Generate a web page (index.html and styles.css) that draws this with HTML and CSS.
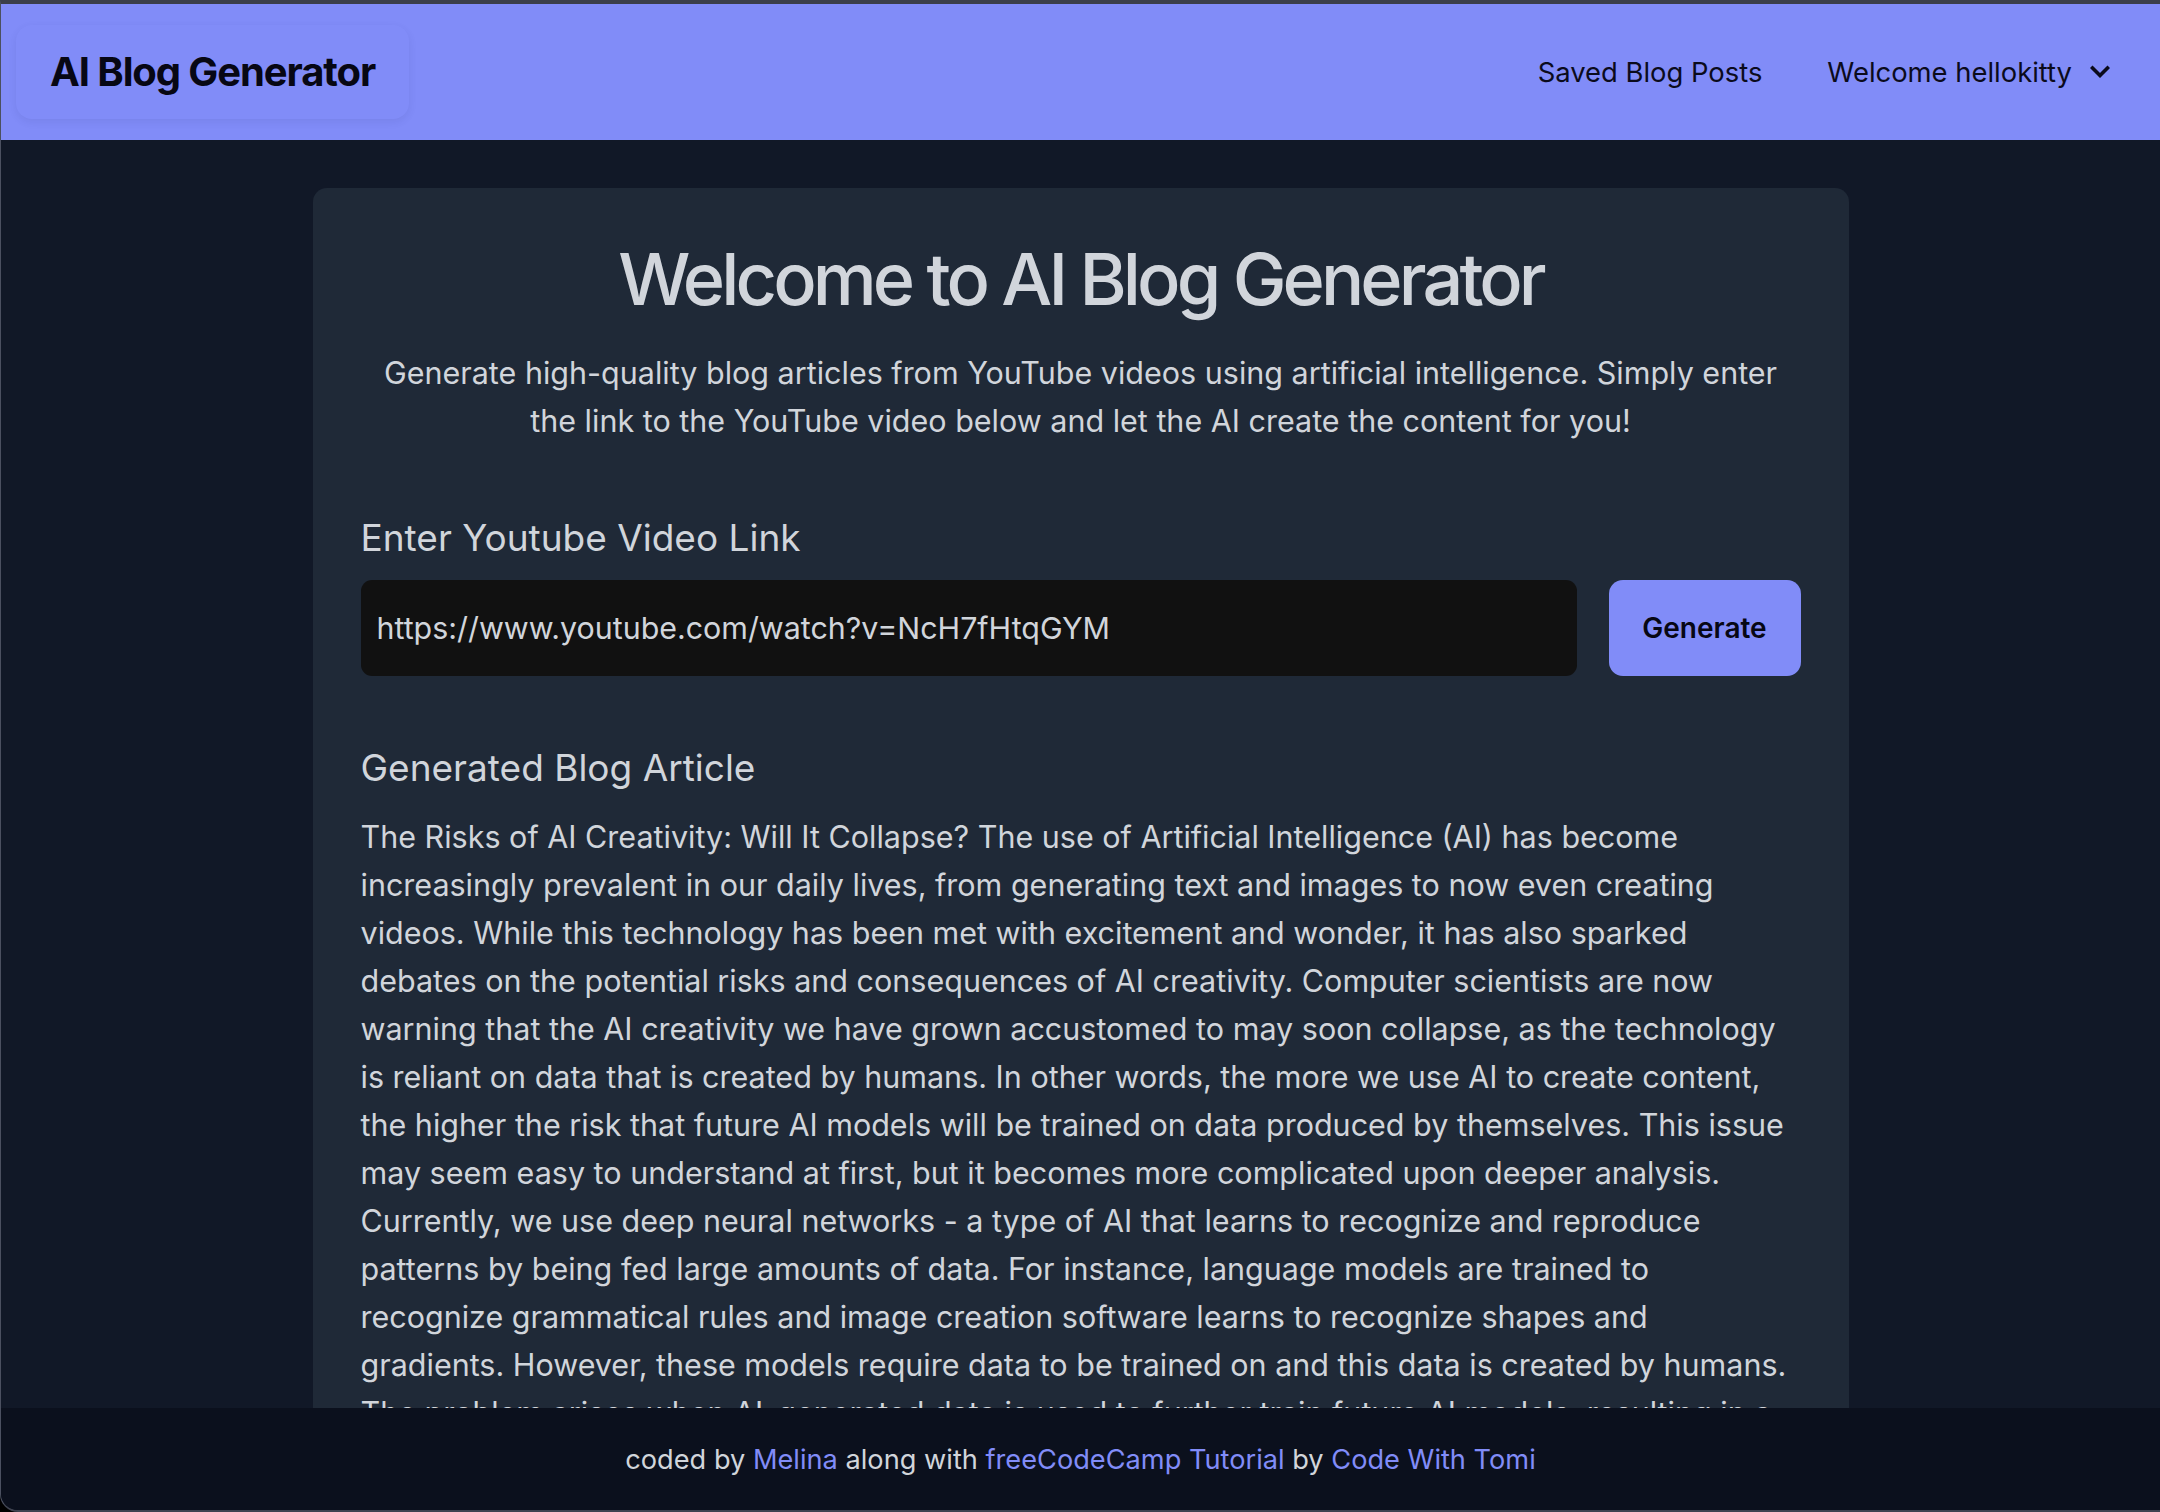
FILE: index.html
```html
<!DOCTYPE html>
<html lang="en">
<head>
<meta charset="utf-8">
<title>AI Blog Generator</title>
<link rel="stylesheet" href="styles.css">
</head>
<body>
<div class="window">
  <nav class="navbar">
    <div class="brand">AI Blog Generator</div>
    <div class="nav-links">
      <a class="nav-link" href="#">Saved Blog Posts</a>
      <div class="user-menu">
        <span>Welcome hellokitty</span>
        <svg class="chevron" viewBox="0 0 20 14" width="20" height="14"><path d="M2.5 3 L10 10.5 L17.5 3" fill="none" stroke="#0b0b1c" stroke-width="3.6" stroke-linecap="square" stroke-linejoin="miter"/></svg>
      </div>
    </div>
  </nav>
  <main class="main">
    <section class="card">
      <h1 class="title">Welcome to AI Blog Generator</h1>
      <p class="intro">Generate high-quality blog articles from YouTube videos using artificial intelligence. Simply enter<br>the link to the YouTube video below and let the AI create the content for you!</p>
      <h2 class="section-heading first">Enter Youtube Video Link</h2>
      <div class="input-row">
        <input class="link-input" type="text" value="https://www.youtube.com/watch?v=NcH7fHtqGYM">
        <button class="generate-btn">Generate</button>
      </div>
      <h2 class="section-heading second">Generated Blog Article</h2>
      <p class="article">The Risks of AI Creativity: Will It Collapse? The use of Artificial Intelligence (AI) has become<br>increasingly prevalent in our daily lives, from generating text and images to now even creating<br>videos. While this technology has been met with excitement and wonder, it has also sparked<br>debates on the potential risks and consequences of AI creativity. Computer scientists are now<br>warning that the AI creativity we have grown accustomed to may soon collapse, as the technology<br>is reliant on data that is created by humans. In other words, the more we use AI to create content,<br>the higher the risk that future AI models will be trained on data produced by themselves. This issue<br>may seem easy to understand at first, but it becomes more complicated upon deeper analysis.<br>Currently, we use deep neural networks - a type of AI that learns to recognize and reproduce<br>patterns by being fed large amounts of data. For instance, language models are trained to<br>recognize grammatical rules and image creation software learns to recognize shapes and<br>gradients. However, these models require data to be trained on and this data is created by humans.<br>The problem arises when AI-generated data is used to further train future AI models, resulting in a<br>feedback loop where the models learn from their own output rather than from original human<br>work. Over time, this can degrade the quality and diversity of what the models produce.</p>
    </section>
  </main>
  <footer class="footer">
    <p>coded by <a href="#">Melina</a> along with <a href="#">freeCodeCamp Tutorial</a> by <a href="#">Code With Tomi</a></p>
  </footer>
</div>
</body>
</html>
```
FILE: styles.css
```css
* { box-sizing: border-box; }
html, body { margin: 0; padding: 0; }
body {
  background: #000;
  font-family: Inter, "Noto Sans", "Liberation Sans", sans-serif;
  color: #d1d5db;
  overflow: hidden;
}
.window {
  position: relative;
  height: 1512px;
  overflow: hidden;
  background: #111827;
  border-top: 4px solid #3b3f4a;
  border-left: 1px solid #4b5060;
  border-bottom: 2px solid #3f4350;
  border-bottom-left-radius: 18px;
}
.navbar {
  height: 136px;
  background: #818cf8;
  display: flex;
  align-items: center;
  justify-content: space-between;
  padding: 0 50px 0 15px;
}
.brand {
  font-weight: 700;
  font-size: 40px;
  line-height: 54px;
  padding: 20px 34px;
  color: #070714;
  border-radius: 16px;
  box-shadow: 0 3px 8px rgba(30, 30, 80, 0.08);
  letter-spacing: -1.1px;
}
.nav-links {
  display: flex;
  align-items: center;
  gap: 65px;
  font-size: 27.4px;
  color: #0b0b1c;
}
.nav-link { color: #0b0b1c; text-decoration: none; }
.user-menu { display: flex; align-items: center; gap: 18px; }
.chevron { display: block; }
.main { padding-top: 48px; }
.card {
  width: 1536px;
  margin: 0 auto;
  background: #1f2937;
  border-radius: 14px;
  padding: 48px 48px 200px;
}
.title {
  margin: 3px 0 0;
  text-align: center;
  font-size: 72px;
  line-height: 80px;
  font-weight: 500;
  letter-spacing: -3.9px;
  color: #d1d5db;
}
.intro {
  margin: 30px 0 0;
  text-align: center;
  font-size: 30.5px;
  line-height: 48px;
  white-space: nowrap;
  color: #d1d5db;
}
.section-heading {
  margin: 0;
  font-size: 37px;
  line-height: 51px;
  font-weight: 400;
  color: #d1d5db;
}
.section-heading.first { margin-top: 67px; }
.section-heading.second { margin-top: 66px; }
.input-row {
  display: flex;
  gap: 32px;
  margin-top: 17px;
  height: 96px;
}
.link-input {
  flex: 1;
  height: 96px;
  background: #111111;
  border: none;
  border-radius: 11px;
  padding: 0 16px;
  font-family: inherit;
  font-size: 30.4px;
  color: #d1d5db;
  outline: none;
}
.generate-btn {
  width: 192px;
  height: 96px;
  background: #818cf8;
  border: none;
  border-radius: 14px;
  font-family: inherit;
  font-size: 28px;
  font-weight: 600;
  color: #070714;
}
.article {
  margin: 20px 0 0;
  font-size: 30.5px;
  line-height: 48px;
  white-space: nowrap;
  color: #d1d5db;
}
.footer {
  position: absolute;
  left: 0;
  right: 0;
  bottom: 0;
  height: 102px;
  background: #0b101d;
  display: flex;
  align-items: center;
  justify-content: center;
}
.footer p {
  margin: 0;
  font-size: 27.2px;
  color: #d1d5db;
}
.footer a { color: #818cf8; text-decoration: none; }
```
